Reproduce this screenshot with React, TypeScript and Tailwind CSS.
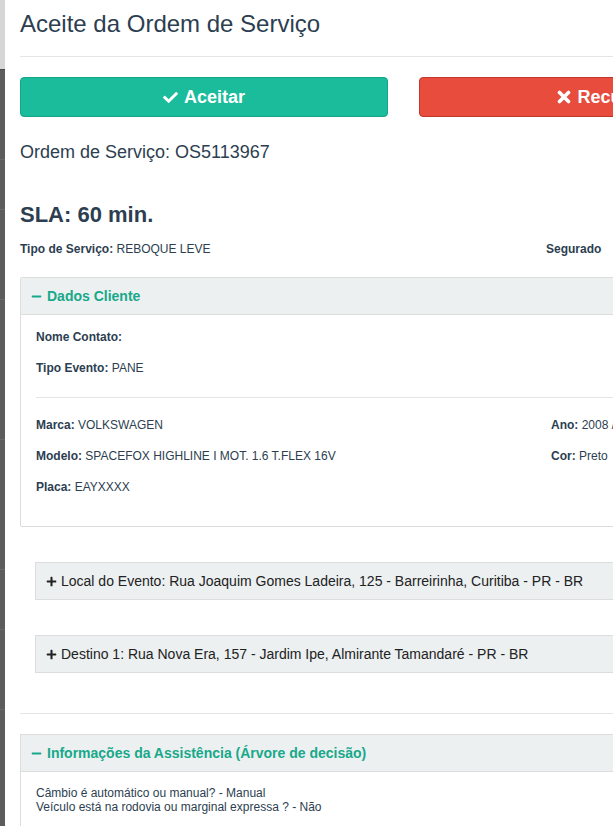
import React from "react";
import { FaCheck, FaPlus, FaMinus } from "react-icons/fa";

const font = { fontFamily: '"Liberation Sans", Arial, sans-serif' };

function Label({ k, v }: { k: string; v?: string }) {
  return (
    <div className="text-[12px] leading-[17px] text-[#2c3e50] whitespace-nowrap">
      <span className="font-bold">{k}</span>
      {v ? <span> {v}</span> : null}
    </div>
  );
}

function ThickX() {
  return (
    <svg viewBox="0 0 14 14" className="w-[14px] h-[14px]">
      <path d="M2.5 2.5 L11.5 11.5 M11.5 2.5 L2.5 11.5" stroke="white" strokeWidth="3.6" strokeLinecap="round" />
    </svg>
  );
}

export default function App() {
  return (
    <div className="w-[613px] h-[826px] overflow-hidden flex bg-white" style={font}>
      {/* backdrop strip */}
      <div className="w-[5px] shrink-0 h-full bg-[#5c5c5c] flex flex-col">
        <div className="h-[70px] bg-[#d6d6d6] border-b border-[#4a4a4a]" />
        <div className="h-[90px] border-b border-[#6a6a6a]" />
        <div className="h-[50px] border-b border-[#6a6a6a]" />
        <div className="h-[90px] border-b border-[#6a6a6a]" />
        <div className="h-[140px] border-b border-[#6a6a6a]" />
        <div className="h-[130px] border-b border-[#6a6a6a]" />
        <div className="h-[60px] border-b border-[#6a6a6a]" />
        <div className="h-[80px] border-b border-[#6a6a6a]" />
      </div>

      {/* modal */}
      <div className="flex-1 overflow-hidden">
        <div className="w-[1100px] pl-[15px]">
          {/* header */}
          <div className="pt-[9px] pb-[17px] border-b border-[#e5e5e5]">
            <h4 className="text-[24px] leading-[30px] text-[#2c3e50]">Aceite da Ordem de Serviço</h4>
          </div>

          {/* buttons */}
          <div className="flex gap-[31px] mt-[20px]">
            <button className="w-[368px] h-[40px] rounded-[4px] bg-[#1abc9c] border border-[#17a589] text-white font-bold text-[18px] flex items-center justify-center gap-[6px]">
              <FaCheck className="w-[15px] h-[15px]" />
              <span>Aceitar</span>
            </button>
            <button className="w-[368px] h-[40px] rounded-[4px] bg-[#e74c3c] border border-[#c0392b] text-white font-bold text-[18px] flex items-center justify-center gap-[6px]">
              <ThickX />
              <span>Recusar</span>
            </button>
          </div>

          <div className="mt-[24px] text-[18px] leading-[22px] text-[#2c3e50]">Ordem de Serviço: OS5113967</div>

          <div className="mt-[39px] text-[22px] leading-[26px] font-bold text-[#2c3e50]">SLA: 60 min.</div>

          <div className="flex mt-[13px]">
            <div className="w-[526px]">
              <Label k="Tipo de Serviço:" v="REBOQUE LEVE" />
            </div>
            <div>
              <Label k="Segurado" />
            </div>
          </div>

          {/* Dados Cliente */}
          <div className="mt-[19px] border border-[#dddddd] rounded-[2px]">
            <div className="h-[37px] bg-[#ecf0f1] border-b border-[#dddddd] flex items-center px-[10px] gap-[5px] text-[#18a88a] font-bold text-[14px]">
              <FaMinus className="w-[11px] h-[11px]" />
              <span>Dados Cliente</span>
            </div>
            <div className="px-[15px] pt-[14px] pb-[30px]">
              <div className="flex flex-col gap-[14px]">
                <Label k="Nome Contato:" />
                <Label k="Tipo Evento:" v="PANE" />
              </div>
              <div className="mt-[20px] mb-[19px] border-t border-[#e5e5e5] w-[1000px]" />
              <div className="flex">
                <div className="w-[515px] flex flex-col gap-[14px]">
                  <Label k="Marca:" v="VOLKSWAGEN" />
                  <Label k="Modelo:" v="SPACEFOX HIGHLINE I MOT. 1.6 T.FLEX 16V" />
                  <Label k="Placa:" v="EAYXXXX" />
                </div>
                <div className="flex flex-col gap-[14px]">
                  <Label k="Ano:" v="2008 / 2009" />
                  <Label k="Cor:" v="Preto" />
                </div>
              </div>
            </div>
          </div>

          {/* Local do Evento */}
          <div className="ml-[15px] mt-[35px] h-[38px] bg-[#ecf0f1] border border-[#dddddd] flex items-center px-[10px] gap-[4px] text-[14px] text-[#222]">
            <FaPlus className="w-[11px] h-[11px]" />
            <span>Local do Evento: Rua Joaquim Gomes Ladeira, 125 - Barreirinha, Curitiba - PR - BR</span>
          </div>

          <div className="ml-[15px] mt-[35px] h-[38px] bg-[#ecf0f1] border border-[#dddddd] flex items-center px-[10px] gap-[4px] text-[14px] text-[#222]">
            <FaPlus className="w-[11px] h-[11px]" />
            <span>Destino 1: Rua Nova Era, 157 - Jardim Ipe, Almirante Tamandaré - PR - BR</span>
          </div>

          <div className="mt-[40px] border-t border-[#e5e5e5]" />

          {/* Informações */}
          <div className="mt-[20px] border border-[#dddddd]">
            <div className="h-[37px] bg-[#ecf0f1] border-b border-[#dddddd] flex items-center px-[10px] gap-[5px] text-[#18a88a] font-bold text-[14px]">
              <FaMinus className="w-[11px] h-[11px]" />
              <span>Informações da Assistência (Árvore de decisão)</span>
            </div>
            <div className="px-[15px] pt-[14px] pb-[20px] text-[12px] leading-[14px] text-[#2c3e50]">
              <div>Câmbio é automático ou manual? - Manual</div>
              <div>Veículo está na rodovia ou marginal expressa ? - Não</div>
            </div>
          </div>
        </div>
      </div>
    </div>
  );
}
